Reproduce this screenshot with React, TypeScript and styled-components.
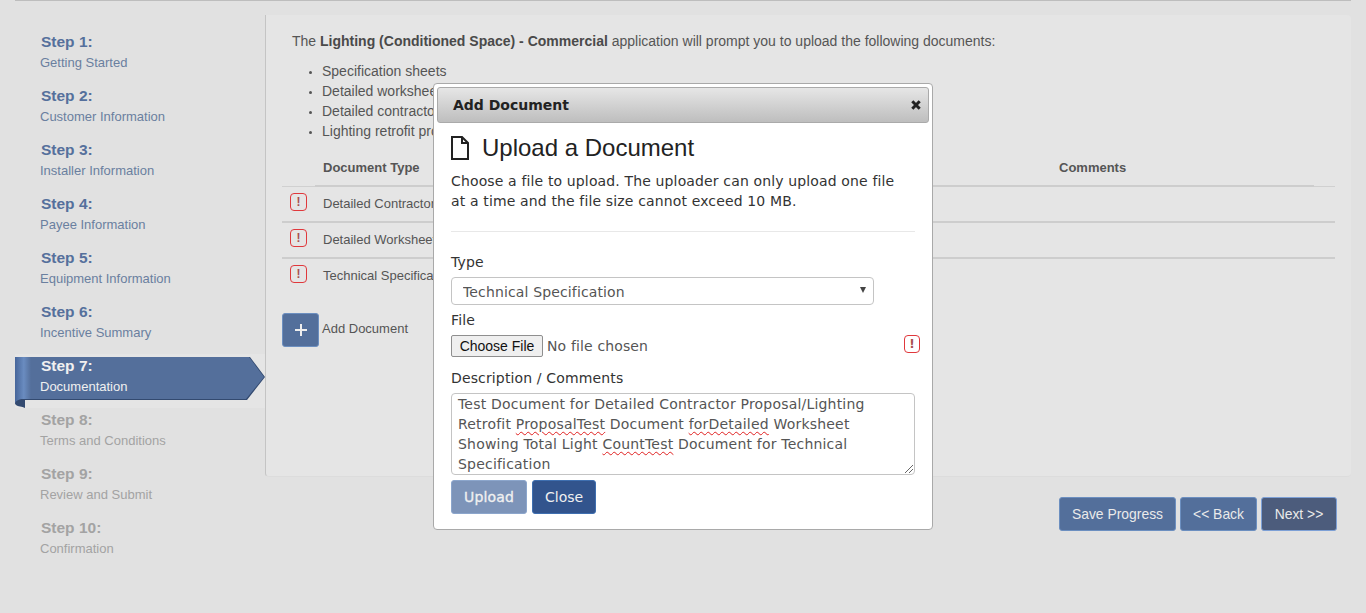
import { createGlobalStyle, styled } from "styled-components";

const GlobalStyle = createGlobalStyle`
  html, body {
    margin: 0;
    padding: 0;
    height: 100%;
    background: #e1e1e1;
    overflow: hidden;
  }
  * {
    box-sizing: border-box;
  }
`;

const steps = [
  { title: "Step 1:", label: "Getting Started", state: "done" },
  { title: "Step 2:", label: "Customer Information", state: "done" },
  { title: "Step 3:", label: "Installer Information", state: "done" },
  { title: "Step 4:", label: "Payee Information", state: "done" },
  { title: "Step 5:", label: "Equipment Information", state: "done" },
  { title: "Step 6:", label: "Incentive Summary", state: "done" },
  { title: "Step 7:", label: "Documentation", state: "active" },
  { title: "Step 8:", label: "Terms and Conditions", state: "todo" },
  { title: "Step 9:", label: "Review and Submit", state: "todo" },
  { title: "Step 10:", label: "Confirmation", state: "todo" },
];

const stepColors: Record<string, { title: string; label: string }> = {
  done: { title: "#55709c", label: "#6a7f9f" },
  active: { title: "#f0f0f0", label: "#f0f0f0" },
  todo: { title: "#a3a3a3", label: "#a3a3a3" },
};

const Page = styled.div`
  position: relative;
  width: 1366px;
  height: 613px;
  padding: 0 15px;
  font-family: "Liberation Sans", Arial, sans-serif;
  color: #555;
  overflow: hidden;
`;

const TopRule = styled.div`
  height: 1px;
  background: #bdbdbd;
`;

const Layout = styled.div`
  display: flex;
  align-items: flex-start;
  padding-top: 14px;
`;

const Sidebar = styled.nav`
  width: 250px;
  flex: none;
  padding-top: 12px;
`;

const StepItem = styled.div`
  position: relative;
  height: 54px;
  padding: 5px 0 0 26px;
`;

const RibbonBand = styled.div`
  position: absolute;
  left: 0;
  top: 3px;
  width: 250px;
  height: 54px;
  background: #e5e5e5;
`;

const Ribbon = styled.svg`
  display: block;
  margin-top: 3px;
`;

const StepTitle = styled.div<{ $state: string }>`
  position: relative;
  font-size: 15.5px;
  font-weight: 700;
  line-height: 20px;
  color: ${(p) => stepColors[p.$state].title};
`;

const StepLabel = styled.div<{ $state: string }>`
  position: relative;
  margin-top: 2px;
  margin-left: -1px;
  font-size: 13px;
  line-height: 18px;
  color: ${(p) => stepColors[p.$state].label};
`;

const Main = styled.div`
  flex: 1;
`;

const Panel = styled.section`
  height: 462px;
  padding: 16px 16px 0;
  background: #e5e5e5;
  border-left: 1px solid #c4c4c4;
  border-bottom: 1px solid #dcdcdc;
  border-radius: 0 4px 4px 4px;
`;

const Intro = styled.p`
  margin: 0 0 0 10px;
  font-size: 14px;
  line-height: 20px;
  strong {
    color: #4a4a4a;
  }
`;

const DocList = styled.ul`
  margin: 10px 0 0;
  padding: 0 0 0 40px;
  font-size: 14px;
  line-height: 20px;
  li::marker {
    font-size: 10px;
  }
`;

const Table = styled.div`
  margin-top: 7px;
`;

const HeaderRow = styled.div`
  position: relative;
  display: grid;
  grid-template-columns: 33px 744px 1fr;
  height: 39px;
  padding-top: 10px;
  font-size: 13px;
  font-weight: 700;
  line-height: 20px;
  border-bottom: 1px solid #d0d0d0;
  &::after {
    content: "";
    position: absolute;
    left: 33px;
    width: 999px;
    bottom: -1px;
    height: 2px;
    background: #cdcdcd;
  }
`;

const TypeHead = styled.span`
  padding-left: 8px;
`;

const BodyRow = styled.div`
  display: grid;
  grid-template-columns: 33px 1fr;
  align-items: center;
  height: 36px;
  padding-bottom: 1px;
  font-size: 13px;
  border-bottom: 2px solid #cdcdcd;
  &:last-child {
    border-bottom-color: transparent;
  }
`;

const RowName = styled.span`
  padding-left: 8px;
`;

const AlertBadge = styled.span`
  display: inline-flex;
  align-items: center;
  justify-content: center;
  width: 17px;
  height: 18px;
  margin: 0 0 4px 8px;
  border: 1.5px solid #e0383c;
  border-radius: 4px;
  color: #a85050;
  font-size: 12px;
  font-weight: 700;
  line-height: 1;
`;

const FileAlert = styled(AlertBadge)`
  position: absolute;
  right: 9px;
  top: 212px;
  margin: 0;
  width: 16px;
`;

const AddRow = styled.div`
  display: flex;
  gap: 3px;
  align-items: flex-start;
  margin-top: 18px;
`;

const AddButton = styled.button`
  display: flex;
  align-items: center;
  justify-content: center;
  width: 37px;
  height: 34px;
  padding: 0;
  border: 1px solid #6c8fc0;
  border-radius: 3px;
  background: #536f9b;
  color: #eee;
`;

const AddLabel = styled.span`
  margin-top: 7px;
  font-size: 13px;
  line-height: 18px;
`;

const Actions = styled.div`
  display: flex;
  justify-content: flex-end;
  gap: 4px;
  margin: 20px 14px 0 0;
`;

const ActionButton = styled.button<{ $current?: boolean }>`
  height: 34px;
  min-width: ${(p) => (p.$current ? "76px" : "0")};
  padding: 0 12px;
  border: 1px solid ${(p) => (p.$current ? "#7da0d6" : "#6c8fc0")};
  border-radius: 3px;
  background: ${(p) => (p.$current ? "#4c5c7c" : "#536f9b")};
  color: #eaeaea;
  font-family: "Liberation Sans", Arial, sans-serif;
  font-size: 13.9px;
`;

const Modal = styled.div`
  position: absolute;
  left: 433px;
  top: 83px;
  width: 500px;
  height: 447px;
  padding: 3px;
  background: #fff;
  border: 1px solid #a9a9a9;
  border-radius: 4px;
  font-family: "DejaVu Sans", Verdana, sans-serif;
  letter-spacing: 0.14px;
  color: #333;
`;

const ModalHeader = styled.header`
  display: flex;
  align-items: center;
  justify-content: space-between;
  height: 36px;
  padding: 0 7px 0 15px;
  border: 1px solid #aaa;
  border-radius: 3px;
  background: linear-gradient(#e6e6e6, #bebebe);
`;

const ModalTitle = styled.h2`
  margin: 0;
  font-size: 14px;
  font-weight: 700;
  letter-spacing: 0;
  color: #222;
`;

const ModalBody = styled.div`
  position: relative;
  padding: 12px 14px 0;
`;

const Heading = styled.h3`
  display: flex;
  align-items: center;
  gap: 13px;
  margin: 0;
  height: 26px;
  font-family: "Liberation Sans", Arial, sans-serif;
  font-size: 24px;
  font-weight: 400;
  letter-spacing: 0;
  color: #222;
`;

const Help = styled.p`
  max-width: 452px;
  margin: 10px 0 0;
  font-size: 14px;
  line-height: 20px;
`;

const Divider = styled.hr`
  margin: 20px 0 0;
  border: 0;
  border-top: 1px solid #e8e8e8;
`;

const FieldLabel = styled.label`
  display: block;
  font-size: 14px;
  line-height: 20px;
`;

const TypeLabel = styled(FieldLabel)`
  margin-top: 20px;
`;

const SelectWrap = styled.div`
  position: relative;
  width: 423px;
  margin-top: 5px;
`;

const Select = styled.select`
  appearance: none;
  width: 100%;
  height: 28px;
  padding: 2px 11px 0;
  border: 1px solid #c4c4c4;
  border-radius: 4px;
  background: #fff;
  font-family: "DejaVu Sans", Verdana, sans-serif;
  font-size: 14px;
  letter-spacing: 0.14px;
  color: #555;
`;

const SelectArrow = styled.span`
  position: absolute;
  right: 8px;
  top: 10px;
  width: 0;
  height: 0;
  border-left: 3px solid transparent;
  border-right: 3px solid transparent;
  border-top: 6px solid #444;
`;

const FileLabel = styled(FieldLabel)`
  margin-top: 5px;
`;

const FileRow = styled.div`
  display: flex;
  align-items: center;
  gap: 4px;
  margin-top: 5px;
  height: 22px;
  font-size: 14px;
  color: #555;
`;

const ChooseButton = styled.button`
  height: 22px;
  width: 92px;
  padding: 0;
  border: 1px solid #8f8f8f;
  border-radius: 2px;
  background: #efefef;
  color: #111;
  font-family: "Liberation Sans", Arial, sans-serif;
  font-size: 14px;
`;

const CommentsLabel = styled(FieldLabel)`
  margin-top: 11px;
`;

const Comments = styled.div`
  position: relative;
  width: 464px;
  height: 82px;
  margin-top: 5px;
  padding: 0 6px;
  border: 1px solid #c4c4c4;
  border-radius: 4px;
  font-size: 14px;
  line-height: 20px;
  letter-spacing: 0.2px;
  color: #555;
  overflow: hidden;
`;

const CommentLine = styled.div`
  white-space: nowrap;
`;

const Misspelled = styled.span`
  text-decoration: underline wavy #e02020 1px;
  text-underline-offset: 2px;
`;

const Grip = styled.svg`
  position: absolute;
  right: 0;
  bottom: 0;
`;

const ModalActions = styled.div`
  display: flex;
  gap: 5px;
  margin-top: 5px;
`;

const ModalButton = styled.button<{ $disabled?: boolean }>`
  height: 34px;
  padding: 0 12px;
  border: 1px solid ${(p) => (p.$disabled ? "#8ca6cc" : "#3f6fb0")};
  border-radius: 3px;
  background: ${(p) => (p.$disabled ? "#7d94b9" : "#32548d")};
  color: #f0f0f0;
  font-family: "DejaVu Sans", Verdana, sans-serif;
  font-size: 14px;
  letter-spacing: ${(p) => (p.$disabled ? "0.15px" : "0")};
  -webkit-text-stroke: ${(p) => (p.$disabled ? "0.3px" : "0")};
`;

const rows = ["Detailed Contractor Proposal", "Detailed Worksheet", "Technical Specification"];

export default function App() {
  return (
    <Page>
      <GlobalStyle />
      <TopRule />
      <Layout>
        <Sidebar>
          {steps.map((s) => (
            <StepItem key={s.title}>
              {s.state === "active" && (
                <RibbonBand>
                  <Ribbon width="250" height="51" viewBox="0 0 250 51">
                    <defs>
                      <linearGradient id="fold" x1="0" x2="1" y1="0" y2="0">
                        <stop offset="0" stopColor="#46659a" />
                        <stop offset="0.55" stopColor="#6a8cc0" />
                        <stop offset="1" stopColor="#546f9b" />
                      </linearGradient>
                    </defs>
                    <path d="M0 0H235L250 20L232 43H10V51C7 49 3 50 1 48C-1 46 0 44 0 43Z" fill="#334a70" />
                    <path d="M0 0H234L249 20L231 42H8C3 42 1 44 0 46Z" fill="#546f9b" />
                    <path d="M0 0H16V42H8C3 42 1 44 0 46Z" fill="url(#fold)" />
                  </Ribbon>
                </RibbonBand>
              )}
              <StepTitle $state={s.state}>{s.title}</StepTitle>
              <StepLabel $state={s.state}>{s.label}</StepLabel>
            </StepItem>
          ))}
        </Sidebar>
        <Main>
          <Panel>
            <Intro>
              The <strong>Lighting (Conditioned Space) - Commercial</strong> application will prompt you to upload the following documents:
            </Intro>
            <DocList>
              <li>Specification sheets</li>
              <li>Detailed worksheet</li>
              <li>Detailed contractor proposal</li>
              <li>Lighting retrofit proposal</li>
            </DocList>
            <Table>
              <HeaderRow>
                <span />
                <TypeHead>Document Type</TypeHead>
                <span>Comments</span>
              </HeaderRow>
              {rows.map((r) => (
                <BodyRow key={r}>
                  <AlertBadge>!</AlertBadge>
                  <RowName>{r}</RowName>
                </BodyRow>
              ))}
            </Table>
            <AddRow>
              <AddButton aria-label="Add Document">
                <svg width="12" height="12" viewBox="0 0 12 12">
                  <path d="M6 0V12M0 6H12" stroke="#eee" strokeWidth="2" />
                </svg>
              </AddButton>
              <AddLabel>Add Document</AddLabel>
            </AddRow>
          </Panel>
          <Actions>
            <ActionButton>Save Progress</ActionButton>
            <ActionButton>&lt;&lt; Back</ActionButton>
            <ActionButton $current>Next &gt;&gt;</ActionButton>
          </Actions>
        </Main>
      </Layout>
      <Modal>
        <ModalHeader>
          <ModalTitle>Add Document</ModalTitle>
          <svg width="10" height="10" viewBox="0 0 10 10">
            <path d="M1.3 1.3L8.7 8.7M8.7 1.3L1.3 8.7" stroke="#222" strokeWidth="3" />
          </svg>
        </ModalHeader>
        <ModalBody>
          <Heading>
            <svg width="18" height="24" viewBox="0 0 18 24" fill="none">
              <path d="M1 1H11L17 7V23H1Z M11 1V7H17" stroke="#222" strokeWidth="2" />
            </svg>
            Upload a Document
          </Heading>
          <Help>
            Choose a file to upload. The uploader can only upload one file at a time and the file size cannot exceed 10 MB.
          </Help>
          <Divider />
          <TypeLabel>Type</TypeLabel>
          <SelectWrap>
            <Select defaultValue="tech">
              <option value="tech">Technical Specification</option>
            </Select>
            <SelectArrow />
          </SelectWrap>
          <FileLabel>File</FileLabel>
          <FileRow>
            <ChooseButton>Choose File</ChooseButton>
            No file chosen
          </FileRow>
          <FileAlert>!</FileAlert>
          <CommentsLabel>Description / Comments</CommentsLabel>
          <Comments>
            <CommentLine>Test Document for Detailed Contractor Proposal/Lighting</CommentLine>
            <CommentLine>
              Retrofit <Misspelled>ProposalTest</Misspelled> Document <Misspelled>forDetailed</Misspelled> Worksheet
            </CommentLine>
            <CommentLine>
              Showing Total Light <Misspelled>CountTest</Misspelled> Document for Technical
            </CommentLine>
            <CommentLine>Specification</CommentLine>
            <Grip width="12" height="12" viewBox="0 0 12 12">
              <path d="M3 11L11 3M7 11L11 7" stroke="#666" strokeWidth="1" />
            </Grip>
          </Comments>
          <ModalActions>
            <ModalButton $disabled>Upload</ModalButton>
            <ModalButton>Close</ModalButton>
          </ModalActions>
        </ModalBody>
      </Modal>
    </Page>
  );
}
